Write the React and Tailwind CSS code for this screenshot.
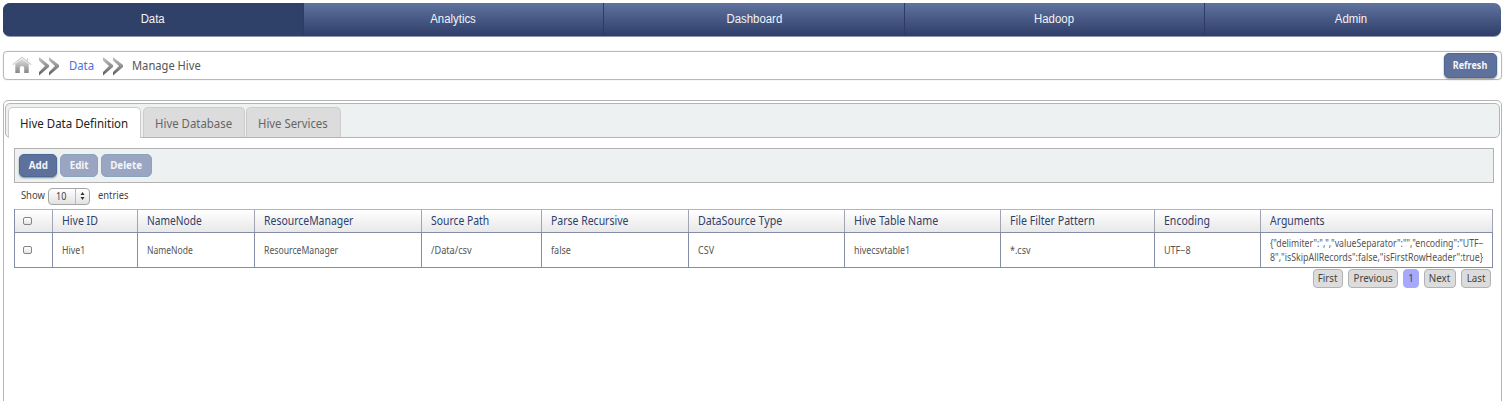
import React from 'react';

const navItems = [
  { label: 'Data', look: 'w-[301px] border-r bg-[#2f4069]' },
  { label: 'Analytics', look: 'w-[300px] border-r' },
  { label: 'Dashboard', look: 'w-[301px] border-r' },
  { label: 'Hadoop', look: 'w-[300px] border-r' },
  { label: 'Admin', look: 'w-[296px] pr-[3px]' },
];

const columns = [
  { head: 'Hive ID', cell: 'Hive1', w: 'w-[85px]', hs: 'scale-x-[.88]', cs: 'scale-x-[.88]' },
  { head: 'NameNode', cell: 'NameNode', w: 'w-[117px]', hs: 'scale-x-[.85]', cs: 'scale-x-[.855]' },
  { head: 'ResourceManager', cell: 'ResourceManager', w: 'w-[167px]', hs: 'scale-x-[.87]', cs: 'scale-x-[.866]' },
  { head: 'Source Path', cell: '/Data/csv', w: 'w-[120px]', hs: 'scale-x-[.865]', cs: 'scale-x-[.92]' },
  { head: 'Parse Recursive', cell: 'false', w: 'w-[147px]', hs: 'scale-x-[.873]', cs: 'scale-x-[.9]' },
  { head: 'DataSource Type', cell: 'CSV', w: 'w-[156px]', hs: 'scale-x-[.888]', cs: 'scale-x-[.9]' },
  { head: 'Hive Table Name', cell: 'hivecsvtable1', w: 'w-[156px]', hs: 'scale-x-[.89]', cs: 'scale-x-[.885]' },
  { head: 'File Filter Pattern', cell: '*.csv', w: 'w-[154px]', hs: 'scale-x-[.885]', cs: 'scale-x-[.9]' },
  { head: 'Encoding', cell: 'UTF−8', w: 'w-[106px]', hs: 'scale-x-[.88]', cs: 'scale-x-[.9]' },
  { head: 'Arguments', cell: '', w: 'w-[232px]', hs: 'scale-x-[.87]', cs: '' },
];

function Home() {
  return (
    <svg className="mb-[2px] ml-[8px] h-[18px] w-[20px] shrink-0" viewBox="0 0 20 18">
      <defs>
        <linearGradient id="home" x1="0" y1="0" x2="0" y2="1">
          <stop offset="0" stopColor="#e2e2e2" />
          <stop offset="1" stopColor="#858585" />
        </linearGradient>
      </defs>
      <path d="M3.300 8 10 2.800l6.700 5.200V17H12.200V12Q12.200 10 10 10T7.800 12V17H3.300Z" fill="url(#home)" />
      <path d="M.8 8.800 10 1.200 19.200 8.800M15.500 5.500V2" fill="none" stroke="#d0d0d0" strokeWidth="1.200" />
    </svg>
  );
}

function Chevrons({ className }) {
  return (
    <svg className={'h-[20px] w-[22px] shrink-0 ' + className} viewBox="0 0 22 20">
      <defs>
        <linearGradient id="chev" x1="0" y1="0" x2="0" y2="1">
          <stop offset="0" stopColor="#c4c4c4" />
          <stop offset="1" stopColor="#5c5c5c" />
        </linearGradient>
      </defs>
      <path d="M1 1 11 9V11L1 19.500V16L7 10 1 4.500ZM11 1 21 9V11L11 19.500V16L17 10 11 4.500Z" fill="url(#chev)" />
    </svg>
  );
}

function Check() {
  return <span className="block h-[8px] w-[9px] rounded-[2px] border border-[#858585] bg-gradient-to-b from-white to-[#e4e4e4]" />;
}

function Button({ children, className }) {
  return (
    <button className={'flex h-[23px] items-center justify-center rounded-[5px] border text-[10.5px] font-bold text-[#f4f6fa] ' + className}>
      {children}
    </button>
  );
}

function PageButton({ children, className }) {
  return (
    <button className={'flex h-[19px] items-center justify-center rounded-[4px] border text-[10.5px] text-[#444] ' + className}>
      <span className="inline-block scale-x-[.93] whitespace-nowrap">{children}</span>
    </button>
  );
}

export default function App() {
  return (
    <div className="h-[401px] w-[1510px] overflow-hidden bg-white pl-[3px] pt-[3px] font-['Noto_Sans',sans-serif] text-[#555]">
      <nav className="flex h-[34px] w-[1498px] overflow-hidden rounded-[7px] border-b border-[#8d96ad] bg-gradient-to-b from-[#60739f] to-[#2e3e68] font-['Liberation_Sans',sans-serif] text-[12px] text-[#f2f4f8]">
        {navItems.map((item) => (
          <div key={item.label} className={'flex shrink-0 items-center justify-center border-[#2d3c66] pb-[2px] ' + item.look}>
            <span className="scale-x-[.95]">{item.label}</span>
          </div>
        ))}
      </nav>

      <div className="mt-[14px] flex h-[29px] w-[1499px] items-center rounded-[4px] border border-[#b9b9b9] text-[12px] shadow-[0_0_1px_#bbb]">
        <Home />
        <Chevrons className="ml-[6px]" />
        <span className="ml-[9px] w-[25px] origin-left scale-x-[.94] text-[#4a74d8]">Data</span>
        <Chevrons className="ml-[8px]" />
        <span className="ml-[8px] inline-block origin-left scale-x-[.93]">Manage Hive</span>
        <Button className="ml-auto mr-[4px] h-[25px] w-[53px] border-[#4a6a96] bg-[#5e719c] shadow-[0_1px_2px_#888]">
          <span className="scale-x-[.86]">Refresh</span>
        </Button>
      </div>

      <main className="mt-[20px] h-[320px] w-[1499px] rounded-t-[5px] border border-[#b5b5b5] px-[1px] pt-[2px]">
        <div className="flex h-[35px] w-full rounded-[5px] border border-[#b5b5b5] bg-[#edf1f2] pt-[3px] text-[12px]">
          <div className="-mb-px ml-[2px] flex w-[133px] items-center rounded-t-[5px] border border-b-0 border-[#ccc] bg-white pl-[11px] pt-[2px] text-[#222]">
            <span className="origin-left scale-x-[.957] whitespace-nowrap">Hive Data Definition</span>
          </div>
          <div className="ml-[2px] flex w-[102px] items-center rounded-t-[5px] border border-b-0 border-[#ccc] bg-[#dcdcdc] pl-[11px] pt-[2px] text-[#666]">
            <span className="origin-left scale-x-[.95] whitespace-nowrap">Hive Database</span>
          </div>
          <div className="ml-px flex w-[95px] items-center rounded-t-[5px] border border-b-0 border-[#ccc] bg-[#dcdcdc] pl-[11px] pt-[2px] text-[#666]">
            <span className="origin-left scale-x-[.945] whitespace-nowrap">Hive Services</span>
          </div>
        </div>

        <div className="ml-[9px] mt-[10px] flex h-[35px] w-[1480px] items-center gap-[3px] border border-[#b2b2b2] bg-[#edf1f2] pl-[4px]">
          <Button className="w-[38px] border-[#4a6a96] bg-[#5e719c] shadow-[0_1px_2px_#888]"><span className="scale-x-[.93]">Add</span></Button>
          <Button className="w-[38px] border-[#8ba3bd] bg-[#9aa6c1]"><span className="scale-x-[.93]">Edit</span></Button>
          <Button className="w-[51px] border-[#8ba3bd] bg-[#9aa6c1]"><span className="scale-x-[.93]">Delete</span></Button>
        </div>

        <div className="ml-[15px] mt-[4px] flex h-[18px] items-center text-[10.5px] text-[#444]">
          <span className="w-[28px] origin-left pl-px scale-x-[.9]">Show</span>
          <div className="flex h-[17px] w-[42px] items-center rounded-[4px] border border-[#a5a5a5] bg-gradient-to-b from-white to-[#e2e2e2]">
            <span className="w-[26px] pl-[7px] text-[10px]"><span className="inline-block origin-left scale-x-[.9]">10</span></span>
            <span className="flex h-[15px] flex-1 items-center justify-center border-l border-[#b9b9b9]">
              <svg className="h-[8px] w-[5px]" viewBox="0 0 5 8"><path d="M2.500 0 4.500 3H.5ZM2.500 8 4.500 5H.5Z" fill="#333" /></svg>
            </span>
          </div>
          <span className="ml-[8px] origin-left scale-x-[.89]">entries</span>
        </div>

        <div className="ml-[9px] mt-[4px] w-[1479px] border-l border-[#858ca6]">
          <div className="flex h-[24px] border-b border-t border-b-[#858ca6] border-t-[#b5b5b5] bg-gradient-to-b from-white to-[#e8e8e8] text-[12px] text-[#2f3f6b]">
            <div className="flex w-[38px] items-center border-r border-[#a0a4b3] pl-[8px]"><Check /></div>
            {columns.map((c) => (
              <div key={c.head} className={'flex shrink-0 items-center border-r border-[#a0a4b3] pl-[8.5px] ' + c.w}>
                <span className={'origin-left whitespace-nowrap ' + c.hs}>{c.head}</span>
              </div>
            ))}
          </div>
          <div className="flex h-[35px] border-b border-[#858ca6] text-[10px] text-[#555]">
            <div className="flex w-[38px] items-center border-r border-[#858ca6] pl-[8px]"><Check /></div>
            {columns.map((c) => (
              <div key={c.head} className={'flex shrink-0 items-center border-r border-[#858ca6] pl-[8.5px] ' + c.w}>
                {c.cell ? (
                  <span className={'origin-left whitespace-nowrap ' + c.cs}>{c.cell}</span>
                ) : (
                  <div className="whitespace-nowrap leading-[14px]">
                    <div className="origin-left scale-x-[.87]">{'{"delimiter":",","valueSeparator":"","encoding":"UTF−'}</div>
                    <div className="origin-left scale-x-[.885]">{'8","isSkipAllRecords":false,"isFirstRowHeader":true}'}</div>
                  </div>
                )}
              </div>
            ))}
          </div>
        </div>

        <div className="mr-[9px] mt-[1px] flex justify-end gap-[5px]">
          <PageButton className="w-[30px] border-[#b2b2b2] bg-[#dcdcdc]">First</PageButton>
          <PageButton className="w-[50px] border-[#b2b2b2] bg-[#dcdcdc]">Previous</PageButton>
          <PageButton className="w-[16px] border-[#aaaaf0] bg-[#a5a8fc]">1</PageButton>
          <PageButton className="w-[32px] border-[#b2b2b2] bg-[#dcdcdc]">Next</PageButton>
          <PageButton className="w-[30px] border-[#b2b2b2] bg-[#dcdcdc]">Last</PageButton>
        </div>
      </main>
    </div>
  );
}
